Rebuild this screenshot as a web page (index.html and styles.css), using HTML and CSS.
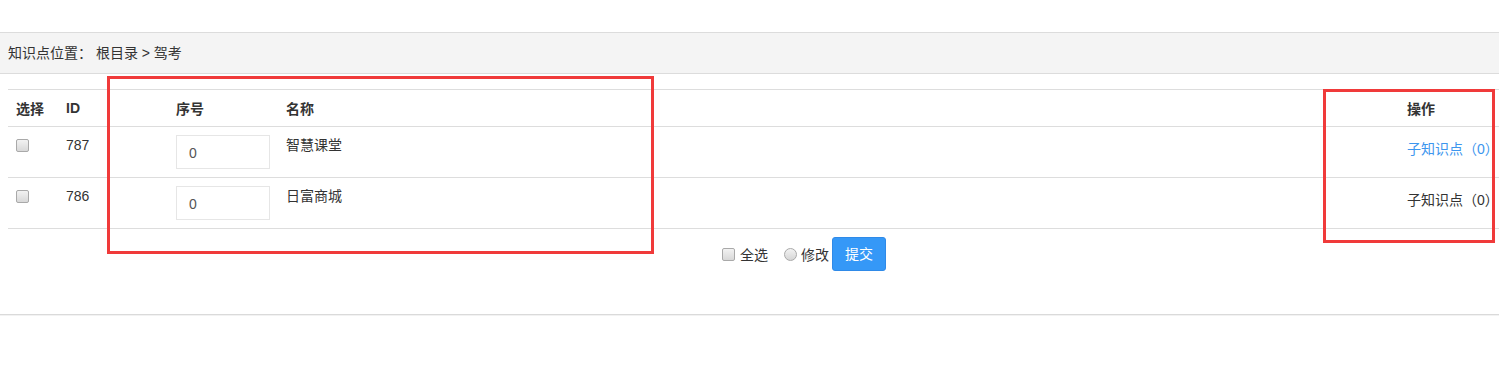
FILE: index.html
```html
<!DOCTYPE html>
<html lang="zh">
<head>
<meta charset="utf-8">
<title>知识点</title>
<link rel="stylesheet" href="styles.css">
</head>
<body>
<div class="page">
  <div class="crumb">知识点位置：&nbsp;根目录 &gt; 驾考</div>
  <table class="grid">
    <thead>
      <tr>
        <th class="c-sel">选择</th>
        <th class="c-id">ID</th>
        <th class="c-no">序号</th>
        <th class="c-name">名称</th>
        <th class="c-op">操作</th>
      </tr>
    </thead>
    <tbody>
      <tr>
        <td class="c-sel"><span class="chk"></span></td>
        <td class="c-id">787</td>
        <td class="c-no"><span class="num">0</span></td>
        <td class="c-name">智慧课堂</td>
        <td class="c-op"><a class="link">子知识点（0）</a></td>
      </tr>
      <tr>
        <td class="c-sel"><span class="chk"></span></td>
        <td class="c-id">786</td>
        <td class="c-no"><span class="num">0</span></td>
        <td class="c-name">日富商城</td>
        <td class="c-op"><span class="plain">子知识点（0）</span></td>
      </tr>
    </tbody>
  </table>
  <div class="actions">
    <span class="chk small"></span><span class="lbl">全选</span>
    <span class="radio"></span><span class="lbl">修改</span>
    <span class="btn">提交</span>
  </div>
  <div class="rule"></div>
  <div class="mark mark-a"></div>
  <div class="mark mark-b"></div>
</div>
</body>
</html>
```

FILE: styles.css
```css
html, body {
  margin: 0;
  padding: 0;
  background: #fff;
}
body {
  font-family: "Liberation Sans", "Noto Sans CJK SC", sans-serif;
  color: #333;
  font-size: 14px;
  overflow: hidden;
}
.page {
  position: relative;
  padding-top: 32px;
  width: 1499px;
}
.crumb {
  height: 40px;
  line-height: 40px;
  border-top: 1px solid #dcdcdc;
  border-bottom: 1px solid #dcdcdc;
  background: #f4f4f4;
  padding-left: 8px;
  font-size: 14px;
  color: #333;
}
.grid {
  margin: 15px 0 0 8px;
  width: 1491px;
  border-collapse: collapse;
  table-layout: fixed;
}
.grid th, .grid td {
  border-top: 1px solid #dddddd;
  border-bottom: 1px solid #dddddd;
  padding: 0 8px;
  text-align: left;
  white-space: nowrap;
}
.grid th {
  height: 36px;
  font-weight: bold;
  font-size: 14px;
  vertical-align: middle;
}
.grid td {
  height: 51px;
  box-sizing: border-box;
  vertical-align: top;
  padding-top: 8px;
  line-height: 20px;
}
.c-sel { width: 34px; }
.c-id { width: 94px; }
.c-no { width: 94px; }
.c-name { width: auto; }
.grid .c-op { width: 92px; padding-right: 0; font-size: 14px; }
.grid td.c-op { padding-top: 12px; }
.chk {
  display: inline-block;
  width: 11px;
  height: 11px;
  border: 1px solid #a9a9a9;
  border-radius: 2px;
  background: linear-gradient(#f2f2f2, #d8d8d8);
  vertical-align: top;
  margin-top: 4px;
}
.num {
  display: inline-block;
  box-sizing: border-box;
  width: 94px;
  height: 34px;
  border: 1px solid #e6e6e6;
  padding: 6px 12px;
  font-size: 14px;
  line-height: 22px;
  color: #555;
}
.link { color: #3d96ee; }
.plain { color: #333; }
.actions {
  display: flex;
  align-items: center;
  height: 34px;
  margin-top: 8px;
  padding-left: 722px;
  font-size: 14px;
}
.chk.small {
  margin-top: 0;
  margin-right: 5px;
}
.lbl { margin-right: 16px; }
.radio {
  display: inline-block;
  width: 11px;
  height: 11px;
  border: 1px solid #a9a9a9;
  border-radius: 50%;
  background: linear-gradient(#f2f2f2, #d6d6d6);
  margin-right: 4px;
}
.radio + .lbl { margin-right: 3px; }
.btn {
  display: inline-block;
  width: 54px;
  height: 34px;
  line-height: 32px;
  text-align: center;
  background: #3598f7;
  color: #fff;
  border-radius: 3px;
  font-size: 14px;
  box-sizing: border-box;
  border: 1px solid #2f8ae8;
}
.rule {
  margin-top: 43px;
  height: 1px;
  border-top: 1px solid #dadada;
  background: #f2f2f2;
}
.mark {
  position: absolute;
  border: 3px solid #f03a3a;
  box-sizing: border-box;
  pointer-events: none;
}
.mark-a {
  left: 107px;
  top: 76px;
  width: 547px;
  height: 178px;
}
.mark-b {
  left: 1323px;
  top: 89px;
  width: 172px;
  height: 154px;
}
```
